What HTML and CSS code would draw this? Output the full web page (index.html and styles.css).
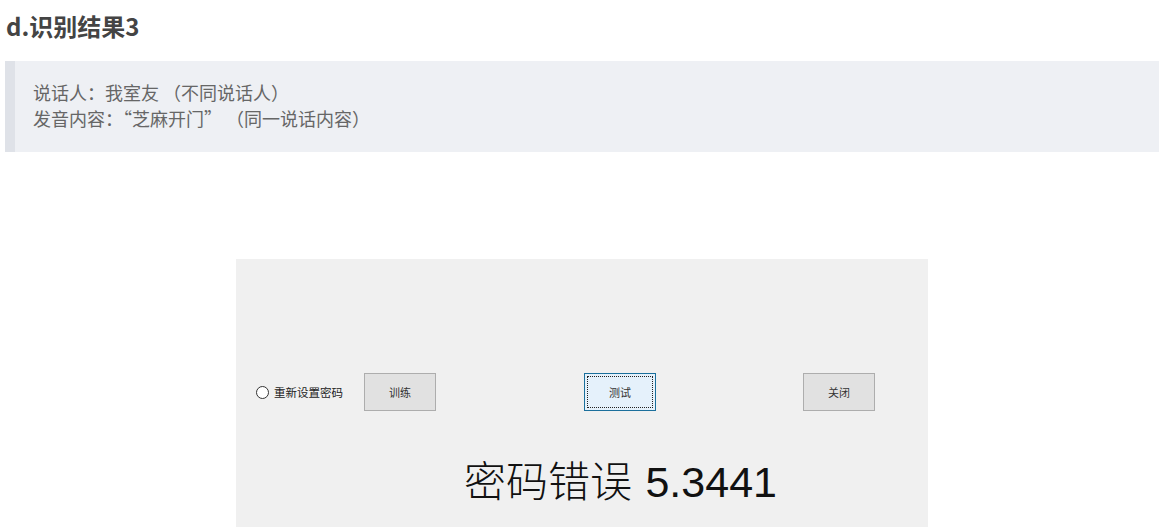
FILE: index.html
```html
<!DOCTYPE html>
<html lang="zh-CN">
<head>
  <meta charset="UTF-8" />
  <meta name="viewport" content="width=device-width, initial-scale=1.0" />
  <title>识别结果3</title>
  <link rel="stylesheet" href="styles.css">
</head>
<body>
  <div class="page">
    <h3 class="title">d.识别结果3</h3>

    <blockquote class="note">
      <p>说话人：我室友 （不同说话人）</p>
      <p>发音内容：“芝麻开门” （同一说话内容）</p>
    </blockquote>

    <div class="shot">
      <div class="form">
        <div class="controls">
          <label class="radio">
            <span class="dot"></span>
            <span>重新设置密码</span>
          </label>
          <button class="win-btn train">训练</button>
          <button class="win-btn test focused"><span class="focus-ring">测试</span></button>
          <button class="win-btn close">关闭</button>
        </div>
        <div class="result">
          <span class="result-cn">密码错误</span> <span class="result-num">5.3441</span>
        </div>
      </div>
    </div>
  </div>
</body>
</html>
```

FILE: styles.css
```css
* { box-sizing: border-box; }

html, body {
  margin: 0;
  background: #ffffff;
  overflow: hidden;
  font-family: 'Noto Sans CJK SC', 'Noto Sans', sans-serif;
}

.page {
  padding: 0 0 0 5px;
}

.title {
  margin: 0;
  padding: 9px 0 0 1px;
  font-size: 24px;
  line-height: 34px;
  font-weight: 700;
  color: #444444;
}

.note {
  margin: 18px 0 0 0;
  padding: 18px 18px 21px 18px;
  background: #eef0f4;
  border-left: 10px solid #dfe2e8;
  color: #666666;
  font-size: 18px;
  line-height: 26px;
}

.note p {
  margin: 0;
}

.shot {
  margin: 107px 0 0 231px;
  width: 692px;
  height: 300px;
  background: #f0f0f0;
}

.form {
  padding-top: 114px;
}

.controls {
  display: flex;
  align-items: center;
  height: 38px;
  padding-left: 20px;
}

.radio {
  display: flex;
  align-items: center;
  gap: 5px;
  font-size: 11.5px;
  color: #222222;
  width: 108px;
}

.dot {
  width: 13px;
  height: 13px;
  border: 1px solid #333333;
  border-radius: 50%;
  background: #ffffff;
}

.win-btn {
  width: 72px;
  height: 38px;
  padding: 0;
  background: #e1e1e1;
  border: 1px solid #adadad;
  border-radius: 0;
  font-family: 'Noto Sans CJK SC', sans-serif;
  font-size: 11px;
  color: #333333;
}

.test {
  margin-left: 148px;
  background: #e5f1fb;
  border-color: #1b6f9c;
  padding: 2px;
}

.focus-ring {
  display: flex;
  align-items: center;
  justify-content: center;
  height: 100%;
  border: 1px dotted #222222;
}

.close {
  margin-left: 147px;
}

.result {
  margin-top: 42px;
  padding-left: 228px;
  font-size: 42px;
  line-height: 52px;
  color: #111111;
}

.result-cn {
  font-family: 'Noto Sans CJK SC', sans-serif;
  font-weight: 300;
}

.result-num {
  margin-left: 4px;
  font-size: 43px;
  font-family: 'Liberation Sans', Arial, sans-serif;
}
```
